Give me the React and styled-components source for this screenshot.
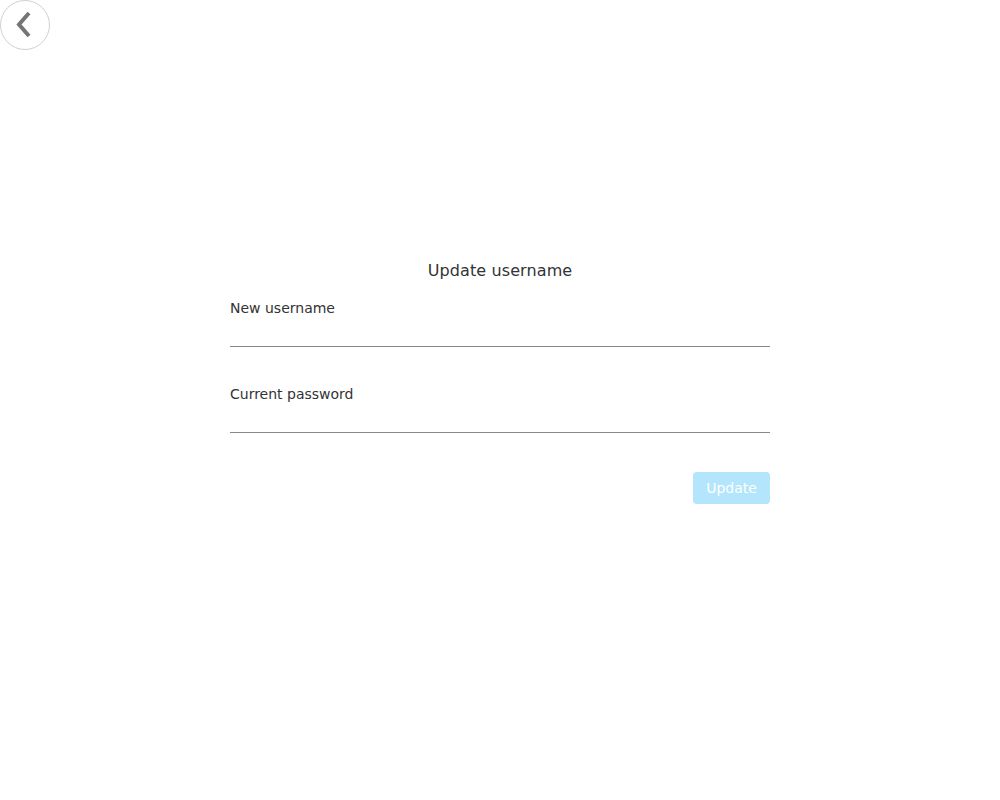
import React from 'react';
import styled, { createGlobalStyle } from 'styled-components';

const GlobalStyle = createGlobalStyle`
    body {
        margin: 0;
        background: #fff;
        font-family: "DejaVu Sans", sans-serif;
    }
`;

const Page = styled.div`
    min-height: 800px;
`;

const BackButton = styled.button`
    width: 50px;
    height: 50px;
    border-radius: 50%;
    border: 1px solid #d0d0d0;
    background: #fff;
    padding: 0;
    display: flex;
    align-items: center;
    justify-content: center;
    cursor: pointer;
`;

const Form = styled.form`
    width: 540px;
    margin: 211px auto 0;
    display: flex;
    flex-direction: column;
`;

const Title = styled.h2`
    margin: 0 0 19px;
    font-size: 16px;
    line-height: 20px;
    font-weight: normal;
    letter-spacing: 0.1px;
    color: #333;
    text-align: center;
`;

const Field = styled.div`
    display: flex;
    flex-direction: column;
    margin-bottom: 39px;
`;

const Label = styled.label`
    font-size: 14px;
    line-height: 17px;
    color: #333;
`;

const Input = styled.input`
    height: 29px;
    border: none;
    border-bottom: 1px solid #888;
    outline: none;
    padding: 0;
    font-family: inherit;
    font-size: 14px;
    background: transparent;
`;

const Actions = styled.div`
    display: flex;
    justify-content: flex-end;
`;

const SubmitButton = styled.button`
    width: 77px;
    height: 32px;
    border: none;
    border-radius: 4px;
    background: #b3e5fc;
    color: #fff;
    font-family: inherit;
    font-size: 14px;
    padding: 0;
`;

function App(){
    return(
        <Page>
            <GlobalStyle />
            <BackButton aria-label="Back">
                <svg width="22" height="30" viewBox="0 0 22 30">
                    <path d="M15 3 L5 14.5 L15 26" fill="none" stroke="#757575" strokeWidth="4" />
                </svg>
            </BackButton>

            <Form onSubmit={e => e.preventDefault()}>
                <Title>Update username</Title>
                <Field>
                    <Label>New username</Label>
                    <Input type="text" />
                </Field>
                <Field>
                    <Label>Current password</Label>
                    <Input type="password" />
                </Field>
                <Actions>
                    <SubmitButton disabled>Update</SubmitButton>
                </Actions>
            </Form>
        </Page>
    )
}

export default App;
